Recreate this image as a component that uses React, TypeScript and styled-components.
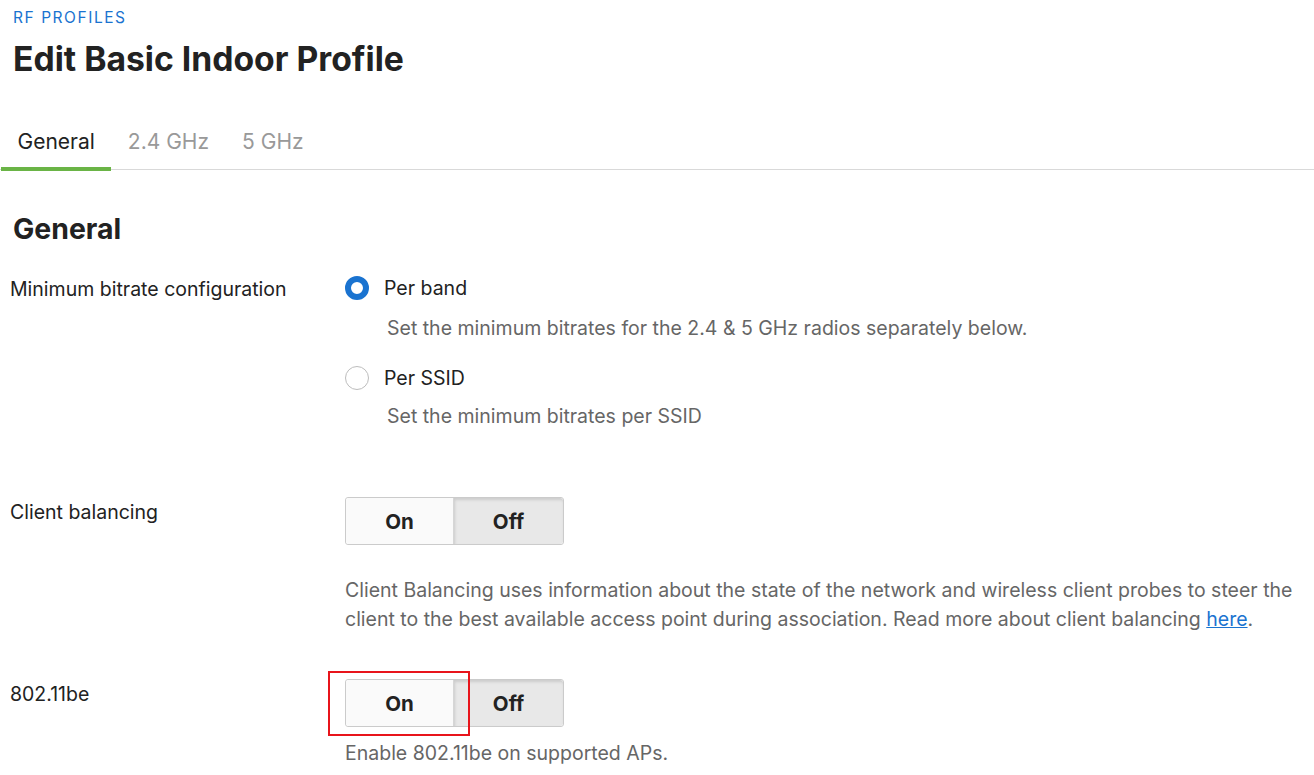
import React from "react";
import styled, { createGlobalStyle, css } from "styled-components";

const Global = createGlobalStyle`
  html, body { margin: 0; padding: 0; background: #fff; }
  body { font-family: Inter, "Noto Sans", sans-serif; color: #222; }
  * { box-sizing: border-box; }
`;

const Page = styled.div`
  width: 1314px;
  padding-top: 8px;
`;

const Header = styled.header`
  padding-left: 13px;
`;

const Eyebrow = styled.div`
  font-size: 15.5px;
  line-height: 20px;
  letter-spacing: 1.55px;
  color: #1a73d0;
  text-transform: uppercase;
`;

const Title = styled.h1`
  margin: 11px 0 0;
  font-size: 33.7px;
  line-height: 40px;
  font-weight: 700;
  color: #222;
`;

const TabBar = styled.nav`
  margin-top: 34px;
  display: flex;
  border-bottom: 1px solid #d9d9d9;
  padding-left: 1px;
`;

const Tab = styled.div<{ $active?: boolean }>`
  padding: 0 16.5px;
  height: 56px;
  display: flex;
  align-items: center;
  font-size: 21px;
  color: ${(p) => (p.$active ? "#222" : "#999")};
  position: relative;
  ${(p) =>
    p.$active &&
    css`
      &::after {
        content: "";
        position: absolute;
        left: 0;
        right: 0;
        bottom: -2px;
        height: 4px;
        background: #6ab446;
      }
    `}
`;

const SectionTitle = styled.h2`
  margin: 42px 0 0 13px;
  font-size: 28.4px;
  line-height: 34px;
  font-weight: 700;
  color: #222;
`;

const Form = styled.div`
  padding-left: 10px;
  margin-top: 28px;
`;

const Row = styled.div<{ $mt?: number }>`
  display: grid;
  grid-template-columns: 335px 1fr;
  margin-top: ${(p) => p.$mt ?? 0}px;
`;

const Label = styled.div`
  font-size: 19.5px;
  line-height: 28px;
  padding-top: 1px;
  color: #222;
`;

const Control = styled.div`
  display: flex;
  flex-direction: column;
  align-items: flex-start;
`;

const RadioOption = styled.div<{ $mt?: number }>`
  display: flex;
  align-items: center;
  gap: 15px;
  margin-top: ${(p) => p.$mt ?? 0}px;
  font-size: 19.5px;
  line-height: 28px;
  color: #222;
`;

const RadioCircle = styled.span<{ $checked?: boolean }>`
  width: 24px;
  height: 24px;
  border-radius: 50%;
  flex: none;
  background: #fff;
  border: ${(p) => (p.$checked ? "6px solid #1a73d0" : "1px solid #bdbdbd")};
`;

const Hint = styled.div<{ $indent?: number; $mt?: number }>`
  font-size: 19.5px;
  line-height: 28px;
  color: #666;
  margin-left: ${(p) => p.$indent ?? 0}px;
  margin-top: ${(p) => p.$mt ?? 0}px;
`;

const Paragraph = styled.p`
  margin: 31px 0 0;
  font-size: 19.5px;
  line-height: 29px;
  color: #666;
  padding-right: 10px;
`;

const Link = styled.a`
  color: #1a73d0;
  text-decoration: underline;
`;

const Toggle = styled.div`
  position: relative;
  display: flex;
  width: 219px;
  height: 48px;
  border: 1px solid #cbcbcb;
  border-radius: 3px;
`;

const ToggleButton = styled.div<{ $pressed?: boolean; $first?: boolean }>`
  flex: ${(p) => (p.$first ? "0 0 108px" : "1")};
  display: flex;
  align-items: center;
  justify-content: center;
  font-size: 20.5px;
  font-weight: 700;
  color: #222;
  background: ${(p) => (p.$pressed ? "#e8e8e8" : "#fafafa")};
  box-shadow: ${(p) => (p.$pressed ? "inset 1px 2px 3px rgba(0,0,0,0.12)" : "none")};
  border-right: ${(p) => (p.$first ? "1px solid #d6d6d6" : "none")};
  border-radius: ${(p) => (p.$first ? "3px 0 0 3px" : "0 3px 3px 0")};
`;

const Highlight = styled.div`
  position: absolute;
  left: -18px;
  top: -9px;
  width: 142px;
  height: 65px;
  border: 2px solid #e8141b;
  pointer-events: none;
`;

export default function App() {
  return (
    <Page>
      <Global />
      <Header>
        <Eyebrow>RF Profiles</Eyebrow>
        <Title>Edit Basic Indoor Profile</Title>
      </Header>
      <TabBar>
        <Tab $active>General</Tab>
        <Tab>2.4 GHz</Tab>
        <Tab>5 GHz</Tab>
      </TabBar>
      <SectionTitle>General</SectionTitle>
      <Form>
        <Row>
          <Label>Minimum bitrate configuration</Label>
          <Control>
            <RadioOption>
              <RadioCircle $checked />
              Per band
            </RadioOption>
            <Hint $indent={42} $mt={12}>
              Set the minimum bitrates for the 2.4 &amp; 5 GHz radios separately below.
            </Hint>
            <RadioOption $mt={22}>
              <RadioCircle />
              Per SSID
            </RadioOption>
            <Hint $indent={42} $mt={10}>
              Set the minimum bitrates per SSID
            </Hint>
          </Control>
        </Row>
        <Row $mt={67}>
          <Label>Client balancing</Label>
          <Control>
            <Toggle>
              <ToggleButton $first>On</ToggleButton>
              <ToggleButton $pressed>Off</ToggleButton>
            </Toggle>
            <Paragraph>
              Client Balancing uses information about the state of the network and wireless client
              probes to steer the client to the best available access point during association.
              Read more about client balancing <Link href="#">here</Link>.
            </Paragraph>
          </Control>
        </Row>
        <Row $mt={45}>
          <Label>802.11be</Label>
          <Control>
            <Toggle>
              <ToggleButton $first>On</ToggleButton>
              <ToggleButton $pressed>Off</ToggleButton>
              <Highlight />
            </Toggle>
            <Hint $mt={12}>Enable 802.11be on supported APs.</Hint>
          </Control>
        </Row>
      </Form>
    </Page>
  );
}
